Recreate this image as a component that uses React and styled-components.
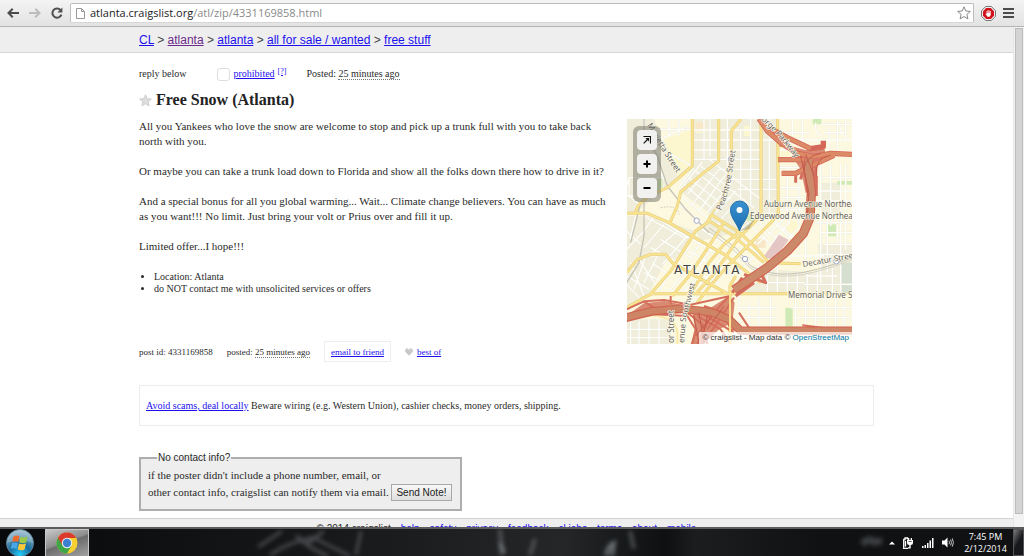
import React from "react";
import styled, { createGlobalStyle, css } from "styled-components";

const sans = '"Liberation Sans", Arial, sans-serif';
const serif = '"Liberation Serif", "Times New Roman", serif';
const ui = '"Open Sans", "Noto Sans", sans-serif';

const GlobalStyle = createGlobalStyle`
  *, *::before, *::after { box-sizing: border-box; }
  body { margin: 0; background: #fff; }
  button, input { font: inherit; }
`;

const Shell = styled.div`
  display: flex;
  flex-direction: column;
  height: 100vh;
  overflow: hidden;
`;

/* ---------- browser toolbar ---------- */

const Toolbar = styled.header`
  display: flex;
  align-items: center;
  flex: none;
  height: 27px;
  padding: 0 5px 0 6px;
  background: linear-gradient(#f4f4f4, #e2e2e2);
  border-bottom: 1px solid #b4b4b4;
`;

const ToolButton = styled.button`
  display: flex;
  align-items: center;
  justify-content: center;
  flex: none;
  width: ${(p) => p.$width || 22}px;
  height: 20px;
  padding: 0;
  border: 0;
  background: none;
`;

const AddressBar = styled.form`
  display: flex;
  align-items: center;
  flex: 1;
  height: 20px;
  margin: 0 5px 0 6px;
  padding: 0 2px 0 5px;
  background: #fff;
  border: 1px solid #bdbdbd;
  border-bottom-color: #d6d6d6;
  border-radius: 2px;
`;

const UrlField = styled.div`
  position: relative;
  flex: 1;
  height: 18px;
  margin-left: 5px;
  font: 11px/18px ${ui};
`;

const UrlInput = styled.input`
  display: block;
  width: 100%;
  height: 18px;
  padding: 0;
  border: 0;
  outline: 0;
  background: none;
  color: transparent;
`;

const UrlText = styled.div`
  position: absolute;
  inset: 0;
  white-space: nowrap;
  pointer-events: none;
  color: #8a8a8a;

  b { font-weight: 400; color: #222; }
`;

/* ---------- web page ---------- */

const Viewport = styled.div`
  display: flex;
  flex: 1;
  min-height: 0;
`;

const Page = styled.div`
  flex: 1;
  min-width: 0;
  overflow: hidden;
  font: 10px/12px ${serif};
  color: #2a2a2a;
`;

const ScrollTrack = styled.div`
  flex: none;
  width: 11px;
  padding: 1px 1px 13px;
  background: #f3f3f3;
  border-left: 1px solid #e6e6e6;
`;

const ScrollThumb = styled.div`
  height: 100%;
  background: #d4d4d4;
  border: 1px solid #bcbcbc;
`;

const Column = styled.div`
  max-width: 735px;
  margin: 0 auto;
`;

const Link = styled.a`
  color: ${(p) => (p.$visited ? "#6b2c8a" : "#1c10f0")};
  text-decoration: underline;
`;

const Crumbs = styled.nav`
  height: 26px;
  background: #eee;
  border-bottom: 1px solid #d6d6d6;
  font: 12px/26px ${sans};
  color: #444;
`;

const ReplyBar = styled.div`
  display: flex;
  align-items: center;
  height: 12px;
  margin-top: 15px;
`;

const FlagLabel = styled.div`
  display: flex;
  align-items: center;
  margin: 0 20px 0 30px;

  sup { margin: 0 0 5px 3px; font-size: 8px; line-height: 8px; }
`;

const FlagBox = styled.input`
  appearance: none;
  width: 13px;
  height: 13px;
  margin: 0 4px 0 0;
  background: #fff;
  border: 1px solid #dedede;
  border-radius: 3px;
`;

const Time = styled.time`
  border-bottom: 1px dotted #777;
`;

const Title = styled.h1`
  display: flex;
  align-items: center;
  gap: 4px;
  height: 18px;
  margin: 11px 0 10px;
  font: bold 16px/18px ${serif};
  color: #222;
`;

const Posting = styled.div`
  display: flex;
  align-items: flex-start;
  justify-content: space-between;
  padding-right: 22px;
`;

const PostText = styled.div`
  flex: 0 1 472px;
`;

const Paragraph = styled.p`
  margin: 0 0 15px;
  font-size: 11px;
  line-height: 15px;
`;

const Notices = styled.ul`
  margin: 17px 0 46px;
  padding-left: 15px;
`;

const PostInfo = styled.div`
  display: flex;
  align-items: center;
  height: 21px;
  font-size: 9px;
`;

const InfoItem = styled.span`
  display: flex;
  align-items: center;
  gap: 4px;
  margin-right: 14px;
  white-space: pre;
  ${(p) =>
    p.$boxed &&
    css`
      height: 21px;
      padding: 0 6px;
      border: 1px solid #eee;
    `}
`;

const ScamNotice = styled.p`
  margin: 23px 0 26px;
  padding: 14px 6px 13px;
  border: 1px solid #ececec;
`;

const ContactBox = styled.fieldset`
  width: 323px;
  margin: 0 0 7px;
  padding: 3px 4px 8px 7px;
  background: #eee;
  border: 2px solid #adadad;
  font-size: 11px;
  line-height: 17px;

  legend {
    margin-left: 9px;
    padding: 0 1px;
    font: 10px/12px ${sans};
  }
`;

const SendButton = styled.button`
  height: 17px;
  margin: 0;
  padding: 0 4px;
  background: linear-gradient(#f8f8f8, #dedede);
  border: 1px solid #a8a8a8;
  font: 10px/13px ${sans};
  color: #222;
`;

const Footer = styled.footer`
  display: flex;
  justify-content: center;
  gap: 10px;
  padding: 3px 0 8px;
  background: #eee;
  border-top: 1px solid #d2d2d2;
  font: 10px/14px ${sans};
`;

/* ---------- map ---------- */

const MapBox = styled.div`
  position: relative;
  flex: none;
  width: 225px;
  height: 225px;
  overflow: hidden;

  > svg { display: block; }
`;

const MapControls = styled.div`
  position: absolute;
  top: 7px;
  left: 6px;
  display: grid;
  gap: 4px;
  padding: 4px;
  background: rgba(110, 110, 100, 0.5);
  border-radius: 6px;
`;

const MapButton = styled.button`
  display: grid;
  place-items: center;
  width: 20px;
  height: 20px;
  padding: 0;
  background: #f1f1f0;
  border: 0;
  border-radius: 4px;
`;

const Attribution = styled.div`
  position: absolute;
  right: 0;
  bottom: 0;
  padding: 0 3px;
  background: rgba(255, 255, 255, 0.7);
  font: 8px/12px ${sans};
  color: #333;

  a { color: #0078a8; text-decoration: none; }
`;

/* ---------- taskbar ---------- */

const Taskbar = styled.footer`
  position: relative;
  display: flex;
  align-items: stretch;
  flex: none;
  height: 29px;
  background: #111214;
  border-top: 2px solid #5c5c5c;
  color: #fff;
`;

const Wallpaper = styled.svg`
  position: absolute;
  inset: 0;
  width: 100%;
  height: 100%;
`;

const StartButton = styled.button`
  position: relative;
  width: 45px;
  padding: 0 0 0 5px;
  border: 0;
  background: none;

  svg { display: block; }
`;

const TaskButton = styled.button`
  position: relative;
  display: grid;
  place-items: center;
  width: 44px;
  padding: 0;
  background: linear-gradient(160deg, #c9c9c9, #8d8d8d 45%, #6c6c6c 50%, #a2a2a2);
  border: 1px solid #c8c8c8;
  border-bottom: 0;
`;

const Tray = styled.div`
  position: relative;
  display: flex;
  align-items: center;
  gap: 8px;
  margin-left: auto;
`;

const Clock = styled.div`
  width: 51px;
  padding-right: 4px;
  font: 9px/12px ${ui};
  text-align: center;
  white-space: nowrap;
`;

const ShowDesktop = styled.button`
  align-self: stretch;
  width: 11px;
  margin-left: -8px;
  padding: 0;
  background: linear-gradient(120deg, #7b7b7b, #17181c 50%);
  border: 1px solid #555;
`;

/* ---------- drawings ---------- */

const ArrowIcon = ({ color, flip }) => (
  <svg width="12" height="10" viewBox="0 0 12 10" fill="none" stroke={color} strokeWidth="2" aria-hidden="true">
    <path d={flip ? "M0 5H10.5M6.3 0.8L10.5 5L6.3 9.2" : "M12 5H1.5M5.7 0.8L1.5 5L5.7 9.2"} />
  </svg>
);

const ReloadIcon = () => (
  <svg width="12" height="12" viewBox="0 0 12 12" aria-hidden="true">
    <path d="M9.5 3A4.6 4.6 0 1 0 10.4 7.6" fill="none" stroke="#505050" strokeWidth="2" />
    <path d="M11.4 0.4V5.4H6.4Z" fill="#505050" />
  </svg>
);

const PageIcon = () => (
  <svg width="9" height="11" viewBox="0 0 9 11" fill="#fff" stroke="#999" aria-hidden="true">
    <path d="M0.5 0.5H5.5L8.5 3.5V10.5H0.5ZM5.5 0.5V3.5H8.5" />
  </svg>
);

const starPath = "M7 0.8L8.8 5L13.3 5.4L9.9 8.4L10.9 12.9L7 10.5L3.1 12.9L4.1 8.4L0.7 5.4L5.2 5Z";

const StarIcon = ({ size, fill, stroke }) => (
  <svg width={size} height={size} viewBox="0 0 14 14" fill={fill} stroke={stroke} aria-hidden="true">
    <path d={starPath} />
  </svg>
);

const BlockIcon = () => (
  <svg width="15" height="15" viewBox="0 0 15 15" aria-hidden="true">
    <path d="M4.7 0.5H10.3L14.5 4.7V10.3L10.3 14.5H4.7L0.5 10.3V4.7Z" fill="#eee" stroke="#777" />
    <path d="M5.2 2H9.8L13 5.2V9.8L9.8 13H5.2L2 9.8V5.2Z" fill="#d3131b" />
    <path d="M5.6 8V5H6.3V8ZM6.7 7V4H7.4V7ZM7.8 7V4.4H8.5V7ZM8.9 7.500V5H9.7V9L8.700 10.800H6.500L4.500 8L5.200 7.500L6 8.300V7H9.500Z" fill="#fff" />
  </svg>
);

const MenuIcon = () => (
  <svg width="11" height="10" viewBox="0 0 11 10" fill="#4c4c4c" aria-hidden="true">
    <path d="M0 0H11V2H0ZM0 4H11V6H0ZM0 8H11V10H0Z" />
  </svg>
);

const HeartIcon = () => (
  <svg width="8" height="8" viewBox="0 0 8 8" fill="#c9c9c9" aria-hidden="true">
    <path d="M4 7.8L0.6 4.2C-0.8 2.4 0.8 0 2.6 0.4C3.4 0.6 4 1.5 4 1.9C4 1.5 4.6 0.6 5.4 0.4C7.2 0 8.8 2.4 7.4 4.2Z" />
  </svg>
);

const ExpandIcon = () => (
  <svg width="8" height="8" viewBox="0 0 8 8" fill="none" stroke="#111" aria-hidden="true">
    <path d="M0.5 0.5H7.5V7.500M0.700 7.300L5.5 2.5" strokeWidth="1.200" />
    <path d="M2.400 2H6V5.600Z" fill="#111" stroke="none" />
  </svg>
);

const SignIcon = ({ plus }) => (
  <svg width="8" height="8" viewBox="0 0 8 8" fill="#000" aria-hidden="true">
    <path d={plus ? "M0.5 3H3V0.5H5V3H7.5V5H5V7.5H3V5H0.5Z" : "M0.5 3H7.5V5H0.5Z"} />
  </svg>
);

/* Street geometry is drawn on a grid three times finer than the map tile. */
const minorRoads = [
  "M205 72H684M205 42H410M205 102H410M205 130H410M284 160H410M322 190H461M340 220H461M240 8V130M350 45V250M380 8V270M436 8V290M258 8V120M310 8V160",
  "M461 50H560M461 75H520M461 102H500M461 155H540M461 215H530M461 245H540M490 150V310M525 200V330M461 280H540M505 8V60M535 8V80",
  "M590 60L575 40V20M600 50H660M615 30V100M640 8V100M590 25H684M665 8V70M645 20L655 60",
  "M590 145V500M620 145V330M650 145V440M684 225H580M575 255H684M590 185H684M575 320H684M590 350H684M600 385H684M580 415H684M610 300V470M640 330V380M665 145V400",
  "M255 130L410 250M230 150L390 275M215 165L262 205L320 250M195 185L300 270M180 205L262 275M165 235L255 310M160 262L240 325",
  "M262 145L190 235M285 160L205 265M305 175L225 285M325 195L250 290M210 155L165 215M235 138L180 205M335 225L275 290M345 250L290 310",
  "M8 210L15 185H110M15 185V240L45 265M60 8V60L90 130L120 190M110 70L190 30M130 110L205 150M70 250L120 215M8 240H35",
  "M135 8V60M165 8V60M100 40H205M90 300L200 370M60 300L180 365M90 300L60 345L8 400M120 325L60 395M160 345L80 415M190 360L115 445M110 370L200 425M80 395L190 455M8 345L50 385M35 300L18 370",
  "M45 430L105 520M8 480L75 520M20 440L60 540M65 420L30 520M100 420L60 500M8 505L50 550M60 470L120 500M90 445L140 480M150 450L110 520M180 470L130 533M225 485L170 533M250 480L205 555M280 470L235 533",
  "M230 375L200 430M265 395L225 450M300 410L260 480M165 440L290 505M185 400L330 480M205 370L350 450M235 340L370 430M280 320L400 410M320 300L365 340M370 320L450 395",
  "M395 315L470 380M430 300L500 365M460 320L515 370M500 315L440 385M530 330L460 400M480 310L400 385M370 395L420 345M330 420L380 370M390 420L345 470M415 440L375 480M450 455L430 480",
  "M345 540V630M375 560V640M405 545V640M440 540V640M340 575H460M350 605H460M515 545V640M545 545V630M575 545V640M605 545V640M635 545V640M660 545V640M500 575H684M515 605H684",
  "M430 470V530M460 450V533M490 470V533M520 470V533M550 470V533M580 470V533M625 455V533M650 445V533M540 505H684M430 500H540M500 420H600M545 480H640M620 415V440M545 360V440",
  "M20 610V684M45 615V684M75 610V684M105 610V684M8 640H140M8 665H140M330 665H684M360 650V684M480 650V684M600 650V684",
];

const mainRoads = [
  "M205 8V150L165 185L130 215L75 240L45 265L32 292M284 8V135L240 170L170 228L160 270L138 320M352 8L322 45V110",
  "M8 292H70L135 320L230 375L300 415L410 500M262 296L345 348L395 395L435 440L530 443M411 8V290M461 8L463 290L445 315L360 400L300 462L250 520L220 560",
  "M411 290L395 315L345 365L300 430L265 480L215 533M262 296L250 320L215 345L190 385L140 465L80 533M300 320L255 390L195 480L145 540M345 348L300 385L255 440L200 533",
  "M8 470L40 430L80 415H125L145 440L205 475L310 533M8 575L60 545L85 533H490M318 684V510L335 480M250 312L330 360L420 440",
];

const mapStroke = { fill: "none", strokeLinejoin: "round" };

const MapDrawing = () => (
  <svg width="225" height="225" viewBox="0 0 225 225" role="img" aria-label="Map of downtown Atlanta">
    <defs>
      <path id="peachtree" d="M94 92Q102 74 104 60L109 28" />
      <path id="marietta" d="M20 6L34 30L56 64" />
      <path id="parkway" d="M134 1L150 16L186 60" />
      <path id="southwest" d="M57 224L59 200L70 158" />
      <linearGradient id="pin" x1="0" y1="0" x2="0" y2="1">
        <stop offset="0" stopColor="#3992d2" />
        <stop offset="1" stopColor="#1d6cae" />
      </linearGradient>
    </defs>
    <rect width="225" height="225" fill="#fcf9e0" />
    <g transform="translate(-3 -3) scale(0.33333)">
      <g fill="#f0eeda">
        <path d="M8 8H90L110 70L205 150L130 215L32 292H8ZM205 8H411V280L345 348L262 296L170 228L205 150ZM411 8H461V290H411Z" />
        <path d="M8 300H70L215 345L190 385L145 440L80 415L8 470ZM262 296L345 348L230 375L215 345Z" />
        <path d="M8 480L60 420L130 425L75 533L8 575ZM420 460L600 470V533H330ZM580 385H684V533H600ZM8 610H140V684H8ZM590 200H650V300H590Z" />
      </g>
      <g fill="#fdf7cf">
        <path d="M120 70L205 40V140L160 180ZM215 20H245V50H215ZM360 30H380V60H360ZM470 90H500V120H470ZM500 310L540 330L520 370L480 340Z" />
      </g>
      <path d="M215 20H245V46H215ZM395 370H425V395H395Z" fill="#f8e8c8" />
      <g fill="#cfeab5">
        <path d="M612 325H636V361H612ZM484 575H506V632H484ZM566 8H592V25H566ZM640 195H684V206H640ZM348 400H358V410H348ZM358 310L385 290L390 318Z" />
        <path d="M100 188H114V226L100 232Z" />
      </g>
      <path d="M652 440H684V533H652Z" fill="#d5dfd0" />
      <g {...mapStroke}>
        <path d={minorRoads.join("")} stroke="#e6e4d6" strokeWidth="5" />
        <path d={minorRoads.join("")} stroke="#fffffb" strokeWidth="4" />
      </g>
      <path d="M417 425L465 356L494 372L452 430Z" fill="#e4c6c4" />
      <g {...mapStroke}>
        <path d="M60 8V50L100 120L130 210L185 280L255 350M60 250V360L45 440L8 500M50 260L20 380" stroke="#c6c4b6" strokeWidth="4" />
        <path d="M255 335L340 400L380 450Q430 478 500 474T684 425" stroke="#c3c1b2" strokeWidth="3" />
        <path d="M250 342L335 407L378 456Q430 484 500 480T684 431" stroke="#d6d4c6" strokeWidth="3" />
        <path d="M110 275Q160 265 165 295" stroke="#c6c4b6" strokeWidth="3" strokeDasharray="5 4" />
        <path d="M322 110L305 230L262 296" stroke="#f3dc90" strokeWidth="5" />
        <path d={mainRoads.join("")} stroke="#e3cb76" strokeWidth="9" />
        <path d={mainRoads.join("")} stroke="#fae391" strokeWidth="6" />
        <path d="M490 533H684M50 603L95 598L145 612L160 645V684" stroke="#faeaa5" strokeWidth="6" />
      </g>
      <g fill="#d98a72">
        <path d="M205 595L245 585L315 540L332 560L325 620L285 640L240 684H200L214 640Z" />
        <path d="M20 590L60 562L120 555L205 572V590L120 595Z" />
        <path d="M500 90L545 102L600 95L610 125L578 150L574 230H545L530 160L510 130Z" />
      </g>
      <g {...mapStroke}>
        <path d="M8 580L60 556L120 552L200 566L315 541M8 615L90 595L190 600L215 640L205 684M190 590L235 625L250 684M240 570L300 590L320 640L380 645M315 541L260 600L220 684M330 545L280 620L235 684M220 600L290 640L320 684M240 595L330 650M60 556L90 575M140 540V565M345 590L375 635M535 628L600 636" stroke="#d56e5a" strokeWidth="6" />
        <path d="M405 8L430 45L470 80L520 112L570 122L620 112L684 115M462 131H560M473 172H515L560 150L630 118M440 38L490 65L560 98L598 92V74" stroke="#d4665a" strokeWidth="16" />
        <path d="M515 175V200M471 60V92M545 130L530 190M578 130L572 200M577 180V240M360 475L425 500L415 480L430 455M325 530L355 485M335 540L390 500" stroke="#d46f5f" strokeWidth="9" />
        <path d="M405 8L430 45L470 80L520 112L570 122L620 112L684 115M462 131H560M473 172H515L560 150L630 118M440 38L490 65L560 98" stroke="#dd8a66" strokeWidth="11" />
        <path d="M556 128L552 150L562 230L558 305L538 352L490 405L430 455L330 522" stroke="#d0604f" strokeWidth="28" />
        <path d="M556 128L552 150L562 230L558 305L538 352L490 405L430 455L330 522" stroke="#cd8a6a" strokeWidth="22" />
        <path d="M8 604L80 586L170 578L260 588L315 610L350 644H684" stroke="#d0604f" strokeWidth="25" />
        <path d="M8 604L80 586L170 578L260 588L315 610L350 644H684" stroke="#cd8566" strokeWidth="19" />
        <path d="M530 120L555 230L550 300M545 115L570 180M590 112Q545 120 540 160L553 240M620 118Q570 125 578 180M250 600L232 684M265 600L215 660M300 570L250 640M225 590L240 684M210 600L225 684" stroke="#c4594a" strokeWidth="3" />
        <path d="M318 684V500" stroke="#fae391" strokeWidth="6" />
      </g>
      <g fill="#fff" stroke="#a0a8cc" strokeWidth="3">
        <circle cx="218" cy="314" r="8" />
        <circle cx="363" cy="429" r="8" />
        <circle cx="637" cy="436" r="8" />
        <circle cx="321" cy="130" r="8" />
      </g>
    </g>
    <g fontFamily='"Noto Sans", sans-serif' fontSize="8" fill="#62625f" stroke="#fffbea" strokeWidth="1.2" paintOrder="stroke">
      <text><textPath href="#peachtree">Peachtree Street</textPath></text>
      <text><textPath href="#marietta">Marietta Street</textPath></text>
      <text><textPath href="#parkway">orge Parkway</textPath></text>
      <text><textPath href="#southwest">enue Southwest</textPath></text>
      <text transform="translate(47 224) rotate(-90)">or Street</text>
      <text x="137" y="88">Auburn Avenue Northea</text>
      <text x="123" y="100">Edgewood Avenue Northea</text>
      <text transform="translate(176 148) rotate(-10)">Decatur Stree</text>
      <text x="161" y="179">Memorial Drive S</text>
      <text x="47" y="155" fontSize="12" fill="#444" letterSpacing="2" fontFamily='"DejaVu Sans", sans-serif'>ATLANTA</text>
    </g>
    <path d="M113 112L128 100L122 110Z" fill="#555" opacity="0.3" />
    <path d="M112.500 112C110 104 103.500 99 103.500 91A9 9 0 0 1 121.500 91C121.500 99 115 104 112.500 112Z" fill="url(#pin)" stroke="#2470a8" />
    <circle cx="112.500" cy="91" r="3" fill="#fff" />
  </svg>
);

const WindowsOrb = () => (
  <svg width="30" height="27" viewBox="0 0 30 27" aria-hidden="true">
    <defs>
      <radialGradient id="orb" cx="0.5" cy="0.95" r="0.9">
        <stop offset="0" stopColor="#20d2ff" />
        <stop offset="0.45" stopColor="#1a6c9c" />
        <stop offset="1" stopColor="#8fb3c8" />
      </radialGradient>
    </defs>
    <circle cx="15" cy="14" r="13.500" fill="url(#orb)" stroke="#5b7f94" />
    <path d="M2 14A13 13 0 0 1 28 14Q15 9 2 14Z" fill="#fff" opacity="0.22" />
    <path d="M8.500 7.500Q11.500 5.500 14.500 7.300L13.200 13Q10.300 11.600 7.200 13.300Z" fill="#ee6b2c" />
    <path d="M15.600 7.800Q18.600 9.400 22.600 7.600L21.200 13.400Q18 15 14.300 13.400Z" fill="#9bcb45" />
    <path d="M7 14.300Q10 12.800 13 14.200L11.700 19.800Q8.600 18.500 5.600 20.200Z" fill="#4aa7e4" />
    <path d="M14 14.600Q17.500 16.100 21 14.500L19.500 20.400Q16 22.200 12.700 20.300Z" fill="#fcc83a" />
  </svg>
);

const ChromeLogo = () => (
  <svg width="22" height="22" viewBox="0 0 22 22" aria-hidden="true">
    <circle cx="11" cy="11" r="10.500" fill="#f7cf30" />
    <path d="M11 11L1.900 5.750A10.500 10.500 0 0 0 11 21.500L15.500 13.700Z" fill="#3fa648" />
    <path d="M11 11L6.500 13.600L1.900 5.750A10.500 10.500 0 0 1 20.100 6H11Z" fill="#dc3a2c" />
    <circle cx="11" cy="11" r="5.200" fill="#f3f3f3" />
    <circle cx="11" cy="11" r="4.200" fill="#3d7fd0" />
  </svg>
);

const TaskbarGlow = () => (
  <Wallpaper viewBox="0 0 1024 27" preserveAspectRatio="none" aria-hidden="true">
    <defs>
      <filter id="soft" x="-10%" y="-50%" width="120%" height="200%"><feGaussianBlur stdDeviation="2" /></filter>
      <linearGradient id="shade">
        <stop offset="0" stopColor="#08090a" />
        <stop offset="0.32" stopColor="#17181a" />
        <stop offset="0.55" stopColor="#252628" />
        <stop offset="0.65" stopColor="#0e1011" />
        <stop offset="0.68" stopColor="#1c1d1f" />
        <stop offset="0.8" stopColor="#101113" />
      </linearGradient>
    </defs>
    <rect width="1024" height="27" fill="url(#shade)" />
    <g filter="url(#soft)" fill="none" stroke="#7c8184">
      <path d="M258 18L282 2M270 26Q290 12 316 8M296 6Q306 18 328 27M306 16L324 2M316 10L350 27M361 2L356 26" strokeWidth="3" opacity="0.5" />
      <path d="M500 0L502 26M535 10L530 26M630 2L634 20" strokeWidth="4" opacity="0.5" />
      <path d="M606 27Q608 16 614 14L612 27M500 14L504 24" strokeWidth="4" opacity="0.8" />
      <path d="M862 15Q870 8 874 13L882 12" strokeWidth="7" opacity="0.4" />
    </g>
  </Wallpaper>
);

const TrayArrow = () => (
  <svg width="6" height="4" viewBox="0 0 6 4" fill="#fff" aria-hidden="true"><path d="M0 3.500L3 0.500L6 3.500Z" /></svg>
);

const PowerIcon = () => (
  <svg width="11" height="12" viewBox="0 0 11 12" aria-hidden="true">
    <path d="M5 11.300H0.700V2.500H2V1H4.500V2.500M2.500 4V9.500" fill="none" stroke="#fff" strokeWidth="1.300" />
    <path d="M4 3H10V6Q10 8 7.700 8V11.500H5V10.300H6.300V8Q4 8 4 6ZM5 1H6.300V3H5ZM7.700 1H9V3H7.700Z" fill="#fff" />
    <path d="M5.500 4.500H8.700" stroke="#333" strokeWidth="0.800" />
  </svg>
);

const SignalIcon = () => (
  <svg width="12" height="10" viewBox="0 0 12 10" fill="#fff" aria-hidden="true">
    <path d="M0 8H1.500V10H0ZM2.500 7H4V10H2.500ZM5 5H6.500V10H5ZM7.500 2.500H9V10H7.500ZM10 0H11.500V10H10Z" />
  </svg>
);

const VolumeIcon = () => (
  <svg width="12" height="11" viewBox="0 0 12 11" fill="none" stroke="#ddd" aria-hidden="true">
    <path d="M0 3.500H2.500L5.500 0.500V10.500L2.500 7.500H0Z" fill="#fff" stroke="none" />
    <path d="M7 3.800Q8 5.500 7 7.200M8.600 2.500Q10.300 5.500 8.600 8.500M10.300 1.400Q12.500 5.500 10.300 9.600" strokeWidth="0.900" />
  </svg>
);

/* ---------- page content ---------- */

const crumbs = ["CL", "atlanta", "atlanta", "all for sale / wanted", "free stuff"];
const footerLinks = ["help", "safety", "privacy", "feedback", "cl jobs", "terms", "about", "mobile"];

const BrowserBar = () => (
  <Toolbar>
    <ToolButton $width={14} aria-label="Back"><ArrowIcon color="#4c4c4c" /></ToolButton>
    <ToolButton $width={29} aria-label="Forward"><ArrowIcon color="#bcbcbc" flip /></ToolButton>
    <ToolButton $width={15} aria-label="Reload"><ReloadIcon /></ToolButton>
    <AddressBar onSubmit={(e) => e.preventDefault()}>
      <PageIcon />
      <UrlField>
        <UrlInput aria-label="Address" />
        <UrlText><b>atlanta.craigslist.org</b>/atl/zip/4331169858.html</UrlText>
      </UrlField>
      <ToolButton $width={15} type="button" aria-label="Bookmark">
        <StarIcon size={14} fill="#fff" stroke="#888" />
      </ToolButton>
    </AddressBar>
    <ToolButton $width={19} aria-label="Blocker"><BlockIcon /></ToolButton>
    <ToolButton $width={21} aria-label="Menu"><MenuIcon /></ToolButton>
  </Toolbar>
);

const Map = () => (
  <MapBox>
    <MapDrawing />
    <MapControls>
      <MapButton aria-label="Full screen"><ExpandIcon /></MapButton>
      <MapButton aria-label="Zoom in"><SignIcon plus /></MapButton>
      <MapButton aria-label="Zoom out"><SignIcon /></MapButton>
    </MapControls>
    <Attribution>© craigslist - Map data © <a href="#osm">OpenStreetMap</a></Attribution>
  </MapBox>
);

export default function App() {
  return (
    <Shell>
      <GlobalStyle />
      <BrowserBar />
      <Viewport>
        <Page>
          <Crumbs>
            <Column>
              {crumbs.map((name, i) => (
                <React.Fragment key={i}>
                  {i > 0 && " > "}
                  <Link href="#crumb" $visited={i === 1}>{name}</Link>
                </React.Fragment>
              ))}
            </Column>
          </Crumbs>
          <Column as="main">
            <ReplyBar>
              <span>reply below</span>
              <FlagLabel>
                <FlagBox type="checkbox" id="flag" aria-label="prohibited" />
                <Link href="#prohibited">prohibited</Link>
                <sup><Link href="#help">[?]</Link></sup>
              </FlagLabel>
              <span>Posted: <Time>25 minutes ago</Time></span>
            </ReplyBar>
            <Title><StarIcon size={13} fill="#ddd" stroke="#ccc" />Free Snow (Atlanta)</Title>
            <Posting>
              <PostText>
                <Paragraph>All you Yankees who love the snow are welcome to stop and pick up a trunk full with you to take back north with you.</Paragraph>
                <Paragraph>Or maybe you can take a trunk load down to Florida and show all the folks down there how to drive in it?</Paragraph>
                <Paragraph>And a special bonus for all you global warming... Wait... Climate change believers. You can have as much as you want!!! No limit. Just bring your volt or Prius over and fill it up.</Paragraph>
                <Paragraph>Limited offer...I hope!!!</Paragraph>
                <Notices>
                  <li>Location: Atlanta</li>
                  <li>do NOT contact me with unsolicited services or offers</li>
                </Notices>
                <PostInfo>
                  <InfoItem>post id: 4331169858</InfoItem>
                  <InfoItem><span>posted: <Time>25 minutes ago</Time></span></InfoItem>
                  <InfoItem $boxed><Link href="#email">email to friend</Link></InfoItem>
                  <InfoItem><HeartIcon /><Link href="#best">best of</Link></InfoItem>
                </PostInfo>
              </PostText>
              <Map />
            </Posting>
            <ScamNotice>
              <Link href="#scams">Avoid scams, deal locally</Link> Beware wiring (e.g. Western Union), cashier checks, money orders, shipping.
            </ScamNotice>
            <ContactBox>
              <legend>No contact info?</legend>
              if the poster didn't include a phone number, email, or
              <br />
              other contact info, craigslist can notify them via email. <SendButton>Send Note!</SendButton>
            </ContactBox>
          </Column>
          <Footer>
            <span>© 2014 craigslist</span>
            {footerLinks.map((name) => <Link key={name} href="#footer">{name}</Link>)}
          </Footer>
        </Page>
        <ScrollTrack><ScrollThumb /></ScrollTrack>
      </Viewport>
      <Taskbar>
        <TaskbarGlow />
        <StartButton aria-label="Start"><WindowsOrb /></StartButton>
        <TaskButton aria-label="Chrome"><ChromeLogo /></TaskButton>
        <Tray>
          <TrayArrow />
          <PowerIcon />
          <SignalIcon />
          <VolumeIcon />
          <Clock>7:45 PM<br />2/12/2014</Clock>
          <ShowDesktop aria-label="Show desktop" />
        </Tray>
      </Taskbar>
    </Shell>
  );
}
